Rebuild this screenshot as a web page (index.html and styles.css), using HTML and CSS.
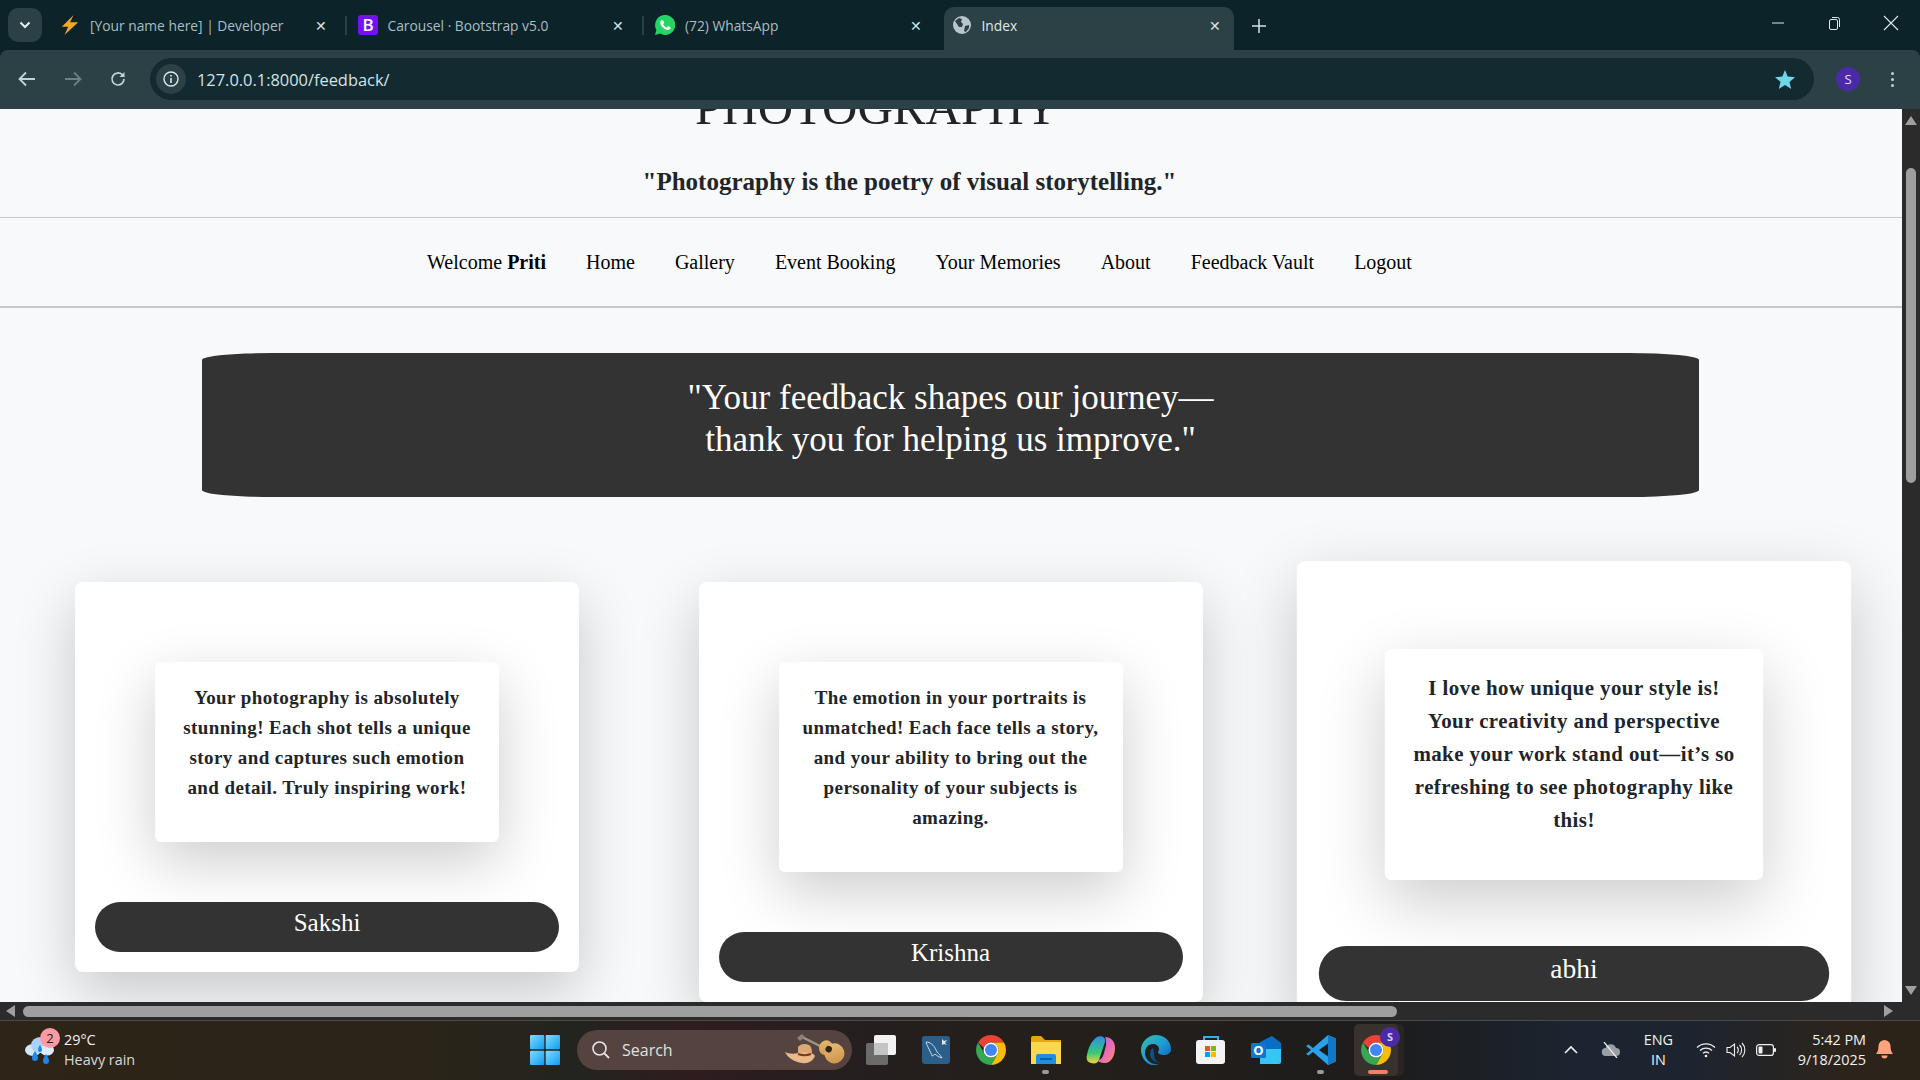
FILE: index.html
```html
<!DOCTYPE html>
<html lang="en">
<head>
  <meta charset="UTF-8">
  <title>Index</title>
  <link rel="stylesheet" href="styles.css">
</head>
<body>
  <svg class="defs" width="0" height="0">
    <symbol id="chrome" viewBox="0 0 48 48">
      <path fill="#ea4335" d="M24 4a20 20 0 0 1 17.32 10H24a10 10 0 0 0-9.6 7.2L6.68 14A20 20 0 0 1 24 4z"/>
      <path fill="#fbbc04" d="M41.32 14A20 20 0 0 1 24 44l8.66-15A10 10 0 0 0 24 14z"/>
      <path fill="#34a853" d="M6.68 14L15.34 29A10 10 0 0 0 32.66 29L24 44A20 20 0 0 1 6.68 14z"/>
      <circle cx="24" cy="24" r="10" fill="#fff"/>
      <circle cx="24" cy="24" r="8" fill="#4285f4"/>
    </symbol>
    <linearGradient id="paneGrad" x1="0" y1="0" x2="1" y2="1">
      <stop offset="0" stop-color="#7fdcfb"/>
      <stop offset="1" stop-color="#0f9cf5"/>
    </linearGradient>
    <linearGradient id="edgeGrad" x1="0" y1="0" x2="1" y2="1">
      <stop offset="0" stop-color="#35c1a0"/>
      <stop offset="0.5" stop-color="#1f9bd6"/>
      <stop offset="1" stop-color="#0c59a4"/>
    </linearGradient>
    <linearGradient id="copilotA" x1="0" y1="0" x2="0" y2="1">
      <stop offset="0" stop-color="#2d8fe6"/>
      <stop offset="0.6" stop-color="#38c77a"/>
      <stop offset="1" stop-color="#f5d13a"/>
    </linearGradient>
    <linearGradient id="copilotB" x1="0" y1="0" x2="1" y2="1">
      <stop offset="0" stop-color="#b05ce8"/>
      <stop offset="0.6" stop-color="#ee6fae"/>
      <stop offset="1" stop-color="#f59a5b"/>
    </linearGradient>
    <linearGradient id="guitarGrad" x1="0" y1="0" x2="1" y2="1">
      <stop offset="0" stop-color="#e9bf78"/>
      <stop offset="1" stop-color="#c98f45"/>
    </linearGradient>
  </svg>

  <div class="tabstrip">
    <div class="tab-search">
      <svg width="12" height="8" viewBox="0 0 12 8"><path d="M1.500 1.500L6 6l4.500-4.500" fill="none" stroke="#e4eef0" stroke-width="2"/></svg>
    </div>
    <div class="tab">
      <svg class="favicon" viewBox="0 0 20 22"><path fill="#f6a623" d="M14 0L1 13h7L4 22 19 8h-9z"/></svg>
      <span class="tab-title">[Your name here] | Developer</span>
      <span class="tab-close">✕</span>
    </div>
    <div class="tab">
      <svg class="favicon" viewBox="0 0 20 20"><rect width="20" height="20" rx="3" fill="#7411f5"/><text x="10" y="16" text-anchor="middle" class="bs-letter">B</text></svg>
      <span class="tab-title">Carousel · Bootstrap v5.0</span>
      <span class="tab-close">✕</span>
    </div>
    <div class="tab">
      <svg class="favicon" viewBox="0 0 20 20"><path fill="#25d366" d="M10 0a10 10 0 0 0-8.600 15L0 20l5.200-1.400A10 10 0 1 0 10 0z"/><path fill="#fff" d="M6.900 4.900c-.5 0-1.700.8-1.700 2.700 0 3 3.900 7.300 7.600 7.500 1.600 0 3-1.100 3-2.300 0-.4-2.300-1.700-2.700-1.500-.4.200-.9 1.200-1.300 1.200-1 0-3.500-2.200-3.500-3.300 0-.4.9-1 1-1.400 0-.4-1.100-2.900-2.400-2.900z"/></svg>
      <span class="tab-title">(72) WhatsApp</span>
      <span class="tab-close">✕</span>
    </div>
    <div class="tab tab-active">
      <svg class="favicon" viewBox="0 0 20 20"><circle cx="10" cy="10" r="9" fill="#b9c5c8"/><path fill="#2b4146" d="M3 6l4-3 3 1-1 3 2 2-1 3-3 0-2-3zM13 11l4-1 0 3-3 4-2-1z"/></svg>
      <span class="tab-title">Index</span>
      <span class="tab-close">✕</span>
    </div>
    <div class="tab-new">
      <svg width="14" height="14" viewBox="0 0 14 14"><path d="M7 0v14M0 7h14" stroke="#d5e3e6" stroke-width="1.500"/></svg>
    </div>
    <div class="win-controls">
      <svg width="14" height="14" viewBox="0 0 14 14"><path d="M1 7h12" stroke="#dfe8ea"/></svg>
      <svg width="14" height="14" viewBox="0 0 14 14"><rect x="2.500" y="3.500" width="8" height="10" rx="1.500" fill="none" stroke="#dfe8ea"/><path d="M5 1.500h5.500a2 2 0 0 1 2 2V11" fill="none" stroke="#dfe8ea"/></svg>
      <svg width="16" height="16" viewBox="0 0 16 16"><path d="M1 1l14 14M15 1L1 15" stroke="#dfe8ea" stroke-width="1.100"/></svg>
    </div>
  </div>

  <div class="toolbar">
    <div class="nav-btns">
      <svg width="18" height="16" viewBox="0 0 18 16"><path d="M17 8H2M8 1.500L1.500 8 8 14.500" fill="none" stroke="#c4d2d5" stroke-width="1.800"/></svg>
      <svg width="18" height="16" viewBox="0 0 18 16"><path d="M1 8h15M10 1.500L16.500 8 10 14.500" fill="none" stroke="#6d8085" stroke-width="1.800"/></svg>
      <svg width="16" height="16" viewBox="0 0 16 16"><path d="M14 8a6 6 0 1 1-1.800-4.300L14 5.500" fill="none" stroke="#c4d2d5" stroke-width="1.700"/><path d="M14.500 1v5h-5z" fill="#c4d2d5"/></svg>
    </div>
    <div class="omnibox">
      <div class="info-chip">
        <svg width="16" height="16" viewBox="0 0 16 16"><circle cx="8" cy="8" r="7" fill="none" stroke="#dfe8ea" stroke-width="1.400"/><path d="M8 7v5M8 4v1.600" stroke="#dfe8ea" stroke-width="1.600"/></svg>
      </div>
      <span class="url">127.0.0.1:8000/feedback/</span>
      <svg class="star" width="20" height="19" viewBox="0 0 20 19"><path fill="#6fd6e8" d="M10 0l2.700 6.600 7.300.6-5.500 4.700 1.700 7.100L10 14.900 3.800 18.900l1.700-7.100L0 7.200l7.300-.6z"/></svg>
    </div>
    <div class="avatar">S</div>
    <div class="menu-dots"><i></i><i></i><i></i></div>
  </div>

  <div class="viewport">
    <main class="page">
      <header class="site-head">
        <h1 class="site-title">PHOTOGRAPHY</h1>
        <p class="tagline">"Photography is the poetry of visual storytelling."</p>
      </header>
      <nav class="site-nav">
        <a>Welcome <b>Priti</b></a>
        <a>Home</a>
        <a>Gallery</a>
        <a>Event Booking</a>
        <a>Your Memories</a>
        <a>About</a>
        <a>Feedback Vault</a>
        <a>Logout</a>
      </nav>
      <section class="banner">
        <p>"Your feedback shapes our journey—<br>thank you for helping us improve."</p>
      </section>
      <section class="feedback-grid">
        <article class="card">
          <div class="quote">Your photography is absolutely stunning! Each shot tells a unique story and captures such emotion and detail. Truly inspiring work!</div>
          <div class="name-pill">Sakshi</div>
        </article>
        <article class="card">
          <div class="quote">The emotion in your portraits is unmatched! Each face tells a story, and your ability to bring out the personality of your subjects is amazing.</div>
          <div class="name-pill">Krishna</div>
        </article>
        <article class="card card-hover">
          <div class="quote">I love how unique your style is! Your creativity and perspective make your work stand out—it’s so refreshing to see photography like this!</div>
          <div class="name-pill">abhi</div>
        </article>
      </section>
    </main>
    <div class="vscroll">
      <span class="arrow arrow-up"></span>
      <div class="vthumb"></div>
      <span class="arrow arrow-down"></span>
    </div>
  </div>

  <div class="hscroll">
    <span class="arrow arrow-left"></span>
    <div class="hthumb"></div>
    <span class="arrow arrow-right"></span>
  </div>

  <footer class="taskbar">
    <div class="weather">
      <div class="weather-icon">
        <svg width="32" height="32" viewBox="0 0 32 32">
          <ellipse cx="9" cy="16" rx="8" ry="6" fill="#cfe6fb"/>
          <ellipse cx="17" cy="11" rx="10" ry="8" fill="#a8d2f8"/>
          <ellipse cx="23" cy="16" rx="7" ry="5.500" fill="#dcecfb"/>
          <path fill="#1f86ea" d="M11 17c2 3 3 5 3 7a3 3 0 0 1-6 0c0-2 1-4 3-7zM22 20c2 3 3 5 3 7a3 3 0 0 1-6 0c0-2 1-4 3-7zM16 11c1.500 2 2 3.500 2 5a2 2 0 0 1-4 0c0-1.500.5-3 2-5z"/>
        </svg>
        <span class="weather-badge">2</span>
      </div>
      <div class="weather-text">
        <span>29°C</span>
        <span class="dim">Heavy rain</span>
      </div>
    </div>

    <div class="task-center">
      <svg class="win-logo" width="30" height="30" viewBox="0 0 30 30">
        <rect width="14.300" height="14.300" rx="1" fill="url(#paneGrad)"/>
        <rect x="15.700" width="14.300" height="14.300" rx="1" fill="url(#paneGrad)"/>
        <rect y="15.700" width="14.300" height="14.300" rx="1" fill="url(#paneGrad)"/>
        <rect x="15.700" y="15.700" width="14.300" height="14.300" rx="1" fill="url(#paneGrad)"/>
      </svg>
      <div class="searchbox">
        <svg width="20" height="20" viewBox="0 0 20 20"><circle cx="8.500" cy="8.500" r="6.500" fill="none" stroke="#e6e6e6" stroke-width="1.600"/><path d="M13.500 13.500L18 18" stroke="#e6e6e6" stroke-width="1.800"/></svg>
        <span>Search</span>
        <svg class="search-art" width="62" height="32" viewBox="0 0 62 32">
          <path d="M16 2l24 12" stroke="#a39684" stroke-width="2.500"/>
          <path d="M18 0l-5 4 3 3 5-4z" fill="#8a8078"/>
          <g transform="rotate(28 46 17)">
            <ellipse cx="41" cy="16" rx="7" ry="7.500" fill="url(#guitarGrad)"/>
            <ellipse cx="51" cy="17" rx="10" ry="10" fill="url(#guitarGrad)"/>
            <circle cx="44" cy="16" r="3.200" fill="#2f2416"/>
          </g>
          <path fill="#dca777" d="M14 13c2-3 7-4 11-2 2 1 3 4 3 8l-14 1z"/>
          <path fill="#eab98a" d="M1 18c4 2 9 2 13 1 4-1 8-1 11 0 3 0 5 1 6 3-2 5-7 8-13 7-8-1-15-6-17-11z"/>
          <path d="M14 20c4 1.500 9 1.500 13 0" stroke="#7a3a20" stroke-width="2" fill="none"/>
        </svg>
      </div>
      <div class="task-icons">
        <div class="task-slot">
          <svg width="30" height="30" viewBox="0 0 30 30"><rect y="8" width="22" height="22" rx="2" fill="#6b6b6b"/><rect x="8" width="22" height="20" rx="2" fill="#f2f2f2"/><rect x="8" y="8" width="14" height="12" fill="#c4c4c4"/></svg>
        </div>
        <div class="task-slot">
          <svg width="28" height="28" viewBox="0 0 28 28"><rect width="28" height="28" rx="3" fill="#2b5f8a"/><path d="M4 6c4 0 8 3 10 8 1 3 4 4 6 8-3-1-5-2-7-4-1 1-2 2-3 2 0-2-2-4-3-7-1-2-2-4-3-7z" fill="none" stroke="#c6dbe9" stroke-width="1"/><path d="M20 3l2 2 3-1-2 3 2 2-3-1-2 1z" fill="#dce9f2"/></svg>
        </div>
        <div class="task-slot">
          <svg width="36" height="36"><use href="#chrome"/></svg>
        </div>
        <div class="task-slot task-open">
          <svg width="30" height="28" viewBox="0 0 30 28"><path d="M0 2a2 2 0 0 1 2-2h8l4 4h16v24H0z" fill="#e4a70f"/><rect y="6" width="30" height="22" fill="#fdd74f"/><path d="M5 20a2 2 0 0 1 2-2h16a2 2 0 0 1 2 2v8H5z" fill="#1d8fe0"/><rect x="9" y="22" width="12" height="2" fill="#0d5da3"/></svg>
        </div>
        <div class="task-slot">
          <svg width="30" height="28" viewBox="0 0 30 28"><path d="M11 1c5-2 9 1 8 5l-6 18c-1 3-4 4-8 3-4-1-5-4-4-8 1-6 4-14 10-18z" fill="url(#copilotA)"/><path d="M19 1c6 0 10 4 10 11 0 8-4 15-10 15-4 0-7-1-7-3 3 0 5-3 6-7l2-8c0-4 0-6-1-8z" fill="url(#copilotB)"/></svg>
        </div>
        <div class="task-slot">
          <svg width="30" height="30" viewBox="0 0 30 30"><path fill="url(#edgeGrad)" d="M15 0c8 0 15 6 15 14 0 4-3 6-7 6-3 0-6-1-6-3 0-1 1-1 1-3 0-3-3-5-6-5-5 0-8 4-8 9 0 6 5 11 11 11 2 0 4 0 5-1-3 2-6 2-8 2C6 30 0 23 0 15 0 7 7 0 15 0z"/><path fill="#0a4f8f" d="M12 13c-3 2-4 6-2 10 2 3 6 5 10 5-4 0-7-4-7-8 0-2 0-5-1-7z"/></svg>
        </div>
        <div class="task-slot">
          <svg width="30" height="30" viewBox="0 0 30 30"><path d="M8 6V2h14v4" fill="none" stroke="#30b0e8" stroke-width="2"/><rect y="5" width="29" height="24" rx="3" fill="#f4f4f4"/><rect x="9" y="11" width="5" height="5" fill="#f25022"/><rect x="15" y="11" width="5" height="5" fill="#7fba00"/><rect x="9" y="17" width="5" height="5" fill="#00a4ef"/><rect x="15" y="17" width="5" height="5" fill="#ffb900"/></svg>
        </div>
        <div class="task-slot">
          <svg width="30" height="28" viewBox="0 0 30 28"><path d="M9 6l12-6 9 7v6H9z" fill="#0a6fc4"/><path d="M9 13h21v13a2 2 0 0 1-2 2H9z" fill="#35c6f4"/><rect y="7" width="15" height="15" rx="1.500" fill="#1273d0"/><text x="7.500" y="19" text-anchor="middle" class="outlook-letter">O</text></svg>
        </div>
        <div class="task-slot task-open">
          <svg width="30" height="30" viewBox="0 0 30 30"><path fill="#2aa2e8" d="M22 0l8 3.500v23L22 30 7 17l-4.500 3.500L0 19l5-4-5-4 2.500-1.500L7 13z"/><path fill="#0f78c8" d="M22 0l8 3.500v23L22 30z"/><path fill="#1a1a18" d="M22 8.500L13 15l9 6.500z"/></svg>
        </div>
        <div class="task-slot task-active">
          <svg width="36" height="36"><use href="#chrome"/></svg>
          <span class="chrome-badge">S</span>
        </div>
      </div>
    </div>

    <div class="tray">
      <svg width="14" height="9" viewBox="0 0 14 9"><path d="M1 8l6-6 6 6" fill="none" stroke="#f0f0f0" stroke-width="1.600"/></svg>
      <svg class="tray-cloud" width="20" height="16" viewBox="0 0 20 16"><path fill="#9a9fa5" d="M5 14a4 4 0 0 1-.5-8A5.500 5.500 0 0 1 15 6a4 4 0 0 1 0 8z"/><path d="M3 0l13 16" stroke="#f0f0f0" stroke-width="1.200"/></svg>
      <div class="lang"><span>ENG</span><span>IN</span></div>
      <div class="tray-sys">
        <svg width="20" height="16" viewBox="0 0 20 16"><path d="M1 5.500a13 13 0 0 1 18 0M4 8.500a9 9 0 0 1 12 0M7 11.300a4.500 4.500 0 0 1 6 0" fill="none" stroke="#f0f0f0" stroke-width="1.300"/><circle cx="10" cy="14" r="1.300" fill="#f0f0f0"/></svg>
        <svg width="20" height="16" viewBox="0 0 20 16"><path d="M1 5.500h3L8.500 2v12L4 10.500H1z" fill="none" stroke="#f0f0f0" stroke-width="1.100"/><path d="M11 5a4 4 0 0 1 0 6M13.500 3a7 7 0 0 1 0 10M16 1a10 10 0 0 1 0 14" fill="none" stroke="#f0f0f0" stroke-width="1.100"/></svg>
        <svg width="20" height="12" viewBox="0 0 20 12"><rect x=".6" y=".6" width="16.800" height="10.800" rx="2.500" fill="none" stroke="#f0f0f0" stroke-width="1.200"/><rect x="2.500" y="2.500" width="4" height="7" rx="1" fill="#f0f0f0"/><rect x="18" y="4" width="2" height="4" rx="1" fill="#f0f0f0"/></svg>
      </div>
      <div class="clock"><span>5:42 PM</span><span>9/18/2025</span></div>
      <svg width="17" height="20" viewBox="0 0 17 20"><path fill="#ffa37e" d="M8.500 0a6 6 0 0 1 6 6c0 4 1 6 2.500 8H0c1.500-2 2.500-4 2.500-8a6 6 0 0 1 6-6z"/><path fill="#ffa37e" d="M5.500 15.500h6a3 3 0 0 1-6 0z"/></svg>
    </div>
  </footer>
</body>
</html>
```

FILE: styles.css
```css
* {
  box-sizing: border-box;
}

body {
  margin: 0;
  width: 1920px;
  height: 1080px;
  overflow: hidden;
  display: flex;
  flex-direction: column;
  background-color: #0b2329;
  font-family: "Open Sans", sans-serif;
}

.defs {
  position: absolute;
}

/* browser tabs */
.tabstrip {
  height: 50px;
  flex: none;
  display: flex;
  align-items: flex-end;
  background-color: #0b2329;
  color: #a9bec3;
  font-size: 13.800px;
}

.tab-search {
  width: 34px;
  height: 34px;
  margin: 0 7px 8px 8px;
  border-radius: 10px;
  background-color: #2b4146;
  display: flex;
  align-items: center;
  justify-content: center;
}

.tab {
  width: 297.500px;
  height: 43px;
  padding: 0 0 7px 11px;
  display: flex;
  align-items: center;
  position: relative;
}

.tab::after {
  content: "";
  position: absolute;
  right: 0;
  top: 9px;
  height: 19px;
  width: 2px;
  background-color: #2b4146;
}

.favicon {
  width: 20px;
  height: 20px;
  flex: none;
  margin-right: 10px;
}

.tab-title {
  flex: 1;
  white-space: nowrap;
}

.tab-close {
  width: 16px;
  margin-right: 18px;
  color: #d5e3e6;
  font-size: 14px;
  text-align: center;
}

.tab:nth-child(4)::after {
  display: none;
}

.tab-active {
  width: 290px;
  margin-left: 2px;
  padding-left: 8px;
  background-color: #2b4146;
  border-radius: 10px 10px 0 0;
  color: #dfe8ea;
}

.tab-active::after {
  display: none;
}

.tab-active .tab-close {
  margin-right: 11px;
}

.bs-letter {
  fill: #fff;
  font-size: 17px;
  font-family: "Open Sans", sans-serif;
  font-weight: 600;
}

.tab-new {
  margin: 0 0 12px 18px;
  height: 24px;
  display: flex;
  align-items: center;
}

.win-controls {
  margin-left: auto;
  margin-right: 21px;
  height: 50px;
  padding-bottom: 4px;
  display: flex;
  align-items: center;
  gap: 42px;
}

/* address bar */
.toolbar {
  height: 59px;
  flex: none;
  background-color: #2b4146;
  display: flex;
  align-items: center;
  padding: 0 0 1px 18px;
  border-radius: 8px 8px 0 0;
}

.nav-btns {
  width: 132px;
  display: flex;
  gap: 28px;
  align-items: center;
}

.omnibox {
  width: 1664px;
  height: 42px;
  border-radius: 21px;
  background-color: #122a30;
  display: flex;
  align-items: center;
  padding: 0 19px 0 6px;
}

.info-chip {
  width: 30px;
  height: 30px;
  border-radius: 50%;
  background-color: #2b4146;
  display: flex;
  align-items: center;
  justify-content: center;
  margin-right: 11px;
}

.url {
  color: #d5e3e6;
  font-size: 16.400px;
}

.star {
  margin-left: auto;
}

.avatar {
  width: 24px;
  height: 24px;
  margin-left: 22px;
  border-radius: 50%;
  background-color: #4b2aa8;
  color: #e3dcf7;
  font-size: 13px;
  display: flex;
  align-items: center;
  justify-content: center;
}

.menu-dots {
  margin-left: 31px;
  display: flex;
  flex-direction: column;
  gap: 3px;
}

.menu-dots i {
  width: 3px;
  height: 3px;
  border-radius: 50%;
  background-color: #c4d2d5;
}

/* the page itself, scrolled down a little */
.viewport {
  height: 893px;
  flex: none;
  display: flex;
}

.page {
  flex: 1;
  overflow: hidden;
  background-color: #f8f9fa;
  font-family: "Liberation Serif", "Times New Roman", serif;
  color: #212529;
}

.site-head {
  height: 108px;
  display: flow-root;
  text-align: center;
}

.site-title {
  margin: -31px 148px 0 0;
  font-size: 49px;
  font-weight: 400;
  line-height: 60px;
}

.tagline {
  margin: 26px 83px 0 0;
  font-size: 25px;
  font-weight: 700;
  line-height: 36px;
}

.site-nav {
  height: 91px;
  padding-right: 63px;
  border-top: 1px solid #c8c8c8;
  border-bottom: 2px solid #c8c8c8;
  display: flex;
  justify-content: center;
  align-items: center;
  gap: 40px;
  font-size: 20px;
  color: #000;
}

.banner {
  height: 144px;
  margin: 45px 203px 85px 202px;
  background-color: #333;
  border-radius: 70px / 7px;
  color: #fff;
  text-align: center;
  font-size: 35px;
  line-height: 42px;
  padding-top: 24px;
}

.banner p {
  margin: 0;
}

.feedback-grid {
  display: grid;
  grid-template-columns: repeat(3, 504px);
  gap: 119.500px;
  padding-left: 75px;
  align-items: start;
}

.card {
  padding: 20px;
  background-color: #fff;
  border-radius: 8px;
  box-shadow: 0 20px 60px rgba(0, 0, 0, 0.2);
}

.card-hover {
  transform: scale(1.1);
}

.quote {
  margin: 60px;
  padding: 21px 20px 39px;
  background-color: #fff;
  border-radius: 6px;
  box-shadow: 0 20px 60px rgba(0, 0, 0, 0.2);
  text-align: center;
  font-size: 19px;
  font-weight: 700;
  line-height: 30px;
  letter-spacing: 0.400px;
}

.name-pill {
  height: 50px;
  border-radius: 25px;
  background-color: #333;
  color: #fff;
  text-align: center;
  font-size: 25px;
  line-height: 30px;
  padding-top: 6px;
}

/* scrollbars */
.vscroll {
  width: 18px;
  flex: none;
  background-color: #2b2b2b;
  display: flex;
  flex-direction: column;
  align-items: center;
  padding: 7px 0;
}

.vthumb {
  width: 10px;
  height: 315px;
  margin-top: 43px;
  border-radius: 5px;
  background-color: #9f9f9f;
}

.arrow {
  width: 0;
  height: 0;
  flex: none;
  border-style: solid;
  border-color: transparent;
}

.arrow-up {
  border-width: 0 6px 9px;
  border-bottom-color: #9f9f9f;
}

.arrow-down {
  margin-top: auto;
  border-width: 9px 6px 0;
  border-top-color: #9f9f9f;
}

.hscroll {
  height: 18px;
  flex: none;
  background-color: #2b2b2b;
  display: flex;
  align-items: center;
  padding: 0 27px 0 6px;
}

.arrow-left {
  border-width: 6px 9px 6px 0;
  border-right-color: #9f9f9f;
}

.arrow-right {
  margin-left: auto;
  border-width: 6px 0 6px 9px;
  border-left-color: #9f9f9f;
}

.hthumb {
  width: 1374px;
  height: 11px;
  margin-left: 8px;
  border-radius: 6px;
  background-color: #9f9f9f;
}

/* windows taskbar */
.taskbar {
  height: 60px;
  flex: none;
  border-top: 1px solid #4a4a4a;
  padding-bottom: 2px;
  display: flex;
  align-items: center;
  color: #f2f2f2;
  font-size: 14.400px;
  background: linear-gradient(90deg, #2e2418 0%, #2b2419 22%, #23241f 30%, #2f1c1f 36%, #261e20 42%, #241f1a 55%, #1d1c1c 72%, #1b2430 82%, #1d2430 88%, #2c241b 96%, #2a2318 100%);
}

.weather {
  width: 530px;
  padding-left: 24px;
  display: flex;
  align-items: center;
  gap: 8px;
}

.weather-icon {
  width: 32px;
  height: 32px;
  position: relative;
}

.weather-badge {
  position: absolute;
  right: -4px;
  top: -6px;
  width: 20px;
  height: 20px;
  border-radius: 50%;
  background-color: #ff99a4;
  color: #1a1a1a;
  font-size: 13px;
  line-height: 20px;
  text-align: center;
}

.weather-text {
  display: flex;
  flex-direction: column;
  line-height: 20px;
}

.dim {
  color: #d8d8d8;
}

.task-center {
  display: flex;
  align-items: center;
}

.searchbox {
  width: 275px;
  height: 40px;
  margin-left: 17px;
  padding: 1px 6px 0 14px;
  border-radius: 20px;
  background-color: #54433e;
  display: flex;
  align-items: center;
  gap: 11px;
  font-size: 16px;
  color: #e0e0e0;
}

.search-art {
  margin-left: auto;
}

.task-icons {
  display: flex;
  margin-left: 1px;
}

.task-slot {
  width: 55px;
  height: 52px;
  display: flex;
  align-items: center;
  justify-content: center;
  position: relative;
}

.task-open::after {
  content: "";
  position: absolute;
  bottom: 2px;
  left: 24px;
  width: 7px;
  height: 4px;
  border-radius: 2px;
  background-color: #9a9a9a;
}

.task-active {
  width: 44px;
  margin-left: 6px;
  border-radius: 5px;
  background-color: #38322e;
  box-shadow: 6px 0 0 #2a2522;
}

.task-active::after {
  content: "";
  position: absolute;
  bottom: 2px;
  left: 14px;
  width: 20px;
  height: 4px;
  border-radius: 2px;
  background-color: #f08068;
}

.chrome-badge {
  position: absolute;
  right: -2px;
  top: 3px;
  width: 20px;
  height: 20px;
  border-radius: 50%;
  background-color: #4b2aa8;
  color: #d8cff2;
  font-size: 11px;
  font-weight: 700;
  line-height: 20px;
  text-align: center;
}

.outlook-letter {
  fill: #fff;
  font-size: 13px;
  font-weight: 700;
  font-family: "Open Sans", sans-serif;
}

.tray {
  margin-left: auto;
  padding-right: 27px;
  display: flex;
  align-items: center;
}

.tray-cloud {
  margin-left: 23px;
}

.lang {
  margin-left: 23px;
  display: flex;
  flex-direction: column;
  align-items: center;
  line-height: 20px;
}

.tray-sys {
  margin-left: 23px;
  display: flex;
  align-items: center;
  gap: 10px;
}

.clock {
  width: 90px;
  display: flex;
  flex-direction: column;
  align-items: flex-end;
  line-height: 20px;
  margin-right: 10px;
}
```
